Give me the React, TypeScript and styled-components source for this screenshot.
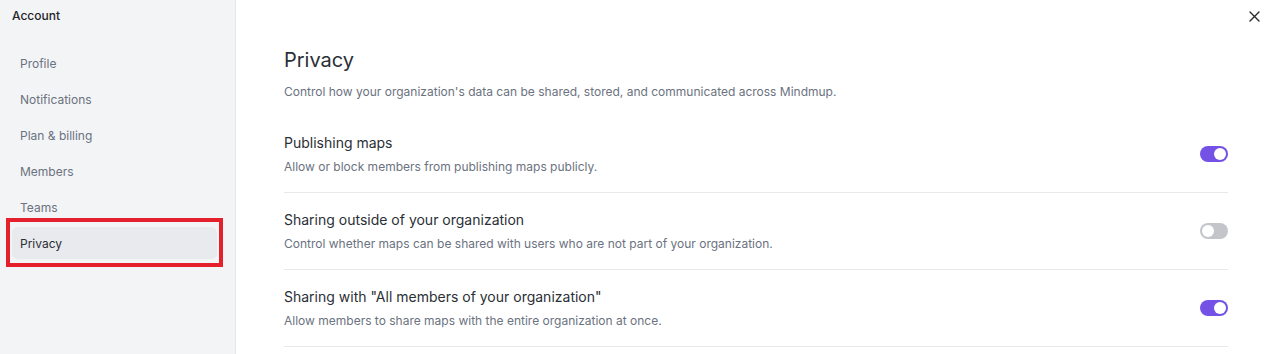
import React, { useState } from 'react'
import styled, { createGlobalStyle } from 'styled-components'

const GlobalStyle = createGlobalStyle`
    html, body {
        margin: 0;
        padding: 0;
        background: #ffffff;
        font-family: Inter, "Noto Sans", "Liberation Sans", sans-serif;
    }
    * {
        box-sizing: border-box;
    }
`

const Layout = styled.div`
    display: flex;
    width: 1270px;
    height: 354px;
    overflow: hidden;
    background: #ffffff;
`

const Sidebar = styled.aside`
    width: 236px;
    flex-shrink: 0;
    background: #f3f4f6;
    border-right: 1px solid #e5e7eb;
    padding: 7px 18px 0 12px;
`

const SidebarTitle = styled.div`
    font-size: 12px;
    line-height: 18px;
    font-weight: 500;
    color: #1f2328;
`

const Nav = styled.nav`
    display: flex;
    flex-direction: column;
    gap: 4px;
    margin-top: 22px;
`

const NavItem = styled.div<{ $active?: boolean }>`
    position: relative;
    height: 32px;
    display: flex;
    align-items: center;
    padding-left: 8px;
    border-radius: 6px;
    font-size: 12px;
    color: ${p => (p.$active ? '#2b2f36' : '#6b7280')};
    background: ${p => (p.$active ? '#e9eaed' : 'transparent')};

    ${p =>
        p.$active &&
        `
        &::after {
            content: '';
            position: absolute;
            top: -9px;
            bottom: -8px;
            left: -6px;
            right: -6px;
            border: 4px solid #e3202c;
        }
    `}
`

const Main = styled.main`
    position: relative;
    flex: 1;
    padding: 46px 42px 0 48px;
`

const CloseButton = styled.button`
    position: absolute;
    top: 9px;
    right: 9px;
    width: 14px;
    height: 14px;
    padding: 0;
    border: none;
    background: none;
    display: flex;
    align-items: center;
    justify-content: center;
    color: #2a2a2a;
`

const Heading = styled.h1`
    margin: 0;
    font-size: 20px;
    line-height: 28px;
    font-weight: 400;
    color: #2b2f36;
`

const Lead = styled.p`
    margin: 10px 0 16px;
    font-size: 12px;
    line-height: 16px;
    color: #6b7280;
`

const Row = styled.div`
    display: flex;
    align-items: center;
    justify-content: space-between;
    padding: 17px 0;
    border-bottom: 1px solid #e7e8eb;
`

const RowText = styled.div`
    display: flex;
    flex-direction: column;
    gap: 6px;
`

const RowTitle = styled.div`
    font-size: 14px;
    line-height: 20px;
    color: #2b2f36;
`

const RowDesc = styled.div`
    font-size: 12px;
    line-height: 16px;
    color: #6b7280;
`

const Track = styled.button<{ $on: boolean }>`
    position: relative;
    width: 28px;
    height: 16px;
    padding: 0;
    border: none;
    border-radius: 8px;
    cursor: pointer;
    background: ${p => (p.$on ? '#7452e6' : '#c3c5ca')};

    &::after {
        content: '';
        position: absolute;
        top: 2px;
        left: ${p => (p.$on ? '14px' : '2px')};
        width: 12px;
        height: 12px;
        border-radius: 50%;
        background: #ffffff;
    }
`

const Toggle: React.FC<{ initial: boolean }> = ({ initial }) => {
    const [on, setOn] = useState(initial)
    return <Track $on={on} onClick={() => setOn(!on)} aria-pressed={on} />
}

const navItems = ['Profile', 'Notifications', 'Plan & billing', 'Members', 'Teams', 'Privacy']

const settings = [
    {
        title: 'Publishing maps',
        desc: 'Allow or block members from publishing maps publicly.',
        on: true,
    },
    {
        title: 'Sharing outside of your organization',
        desc: 'Control whether maps can be shared with users who are not part of your organization.',
        on: false,
    },
    {
        title: 'Sharing with "All members of your organization"',
        desc: 'Allow members to share maps with the entire organization at once.',
        on: true,
    },
]

export default function App() {
    return (
        <>
            <GlobalStyle />
            <Layout>
                <Sidebar>
                    <SidebarTitle>Account</SidebarTitle>
                    <Nav>
                        {navItems.map(item => (
                            <NavItem key={item} $active={item === 'Privacy'}>
                                {item}
                            </NavItem>
                        ))}
                    </Nav>
                </Sidebar>
                <Main>
                    <CloseButton aria-label="Close">
                        <svg width="11" height="11" viewBox="0 0 11 11">
                            <path d="M1 1L10 10M10 1L1 10" stroke="currentColor" strokeWidth="1.4" strokeLinecap="round" />
                        </svg>
                    </CloseButton>
                    <Heading>Privacy</Heading>
                    <Lead>Control how your organization's data can be shared, stored, and communicated across Mindmup.</Lead>
                    {settings.map(s => (
                        <Row key={s.title}>
                            <RowText>
                                <RowTitle>{s.title}</RowTitle>
                                <RowDesc>{s.desc}</RowDesc>
                            </RowText>
                            <Toggle initial={s.on} />
                        </Row>
                    ))}
                </Main>
            </Layout>
        </>
    )
}
